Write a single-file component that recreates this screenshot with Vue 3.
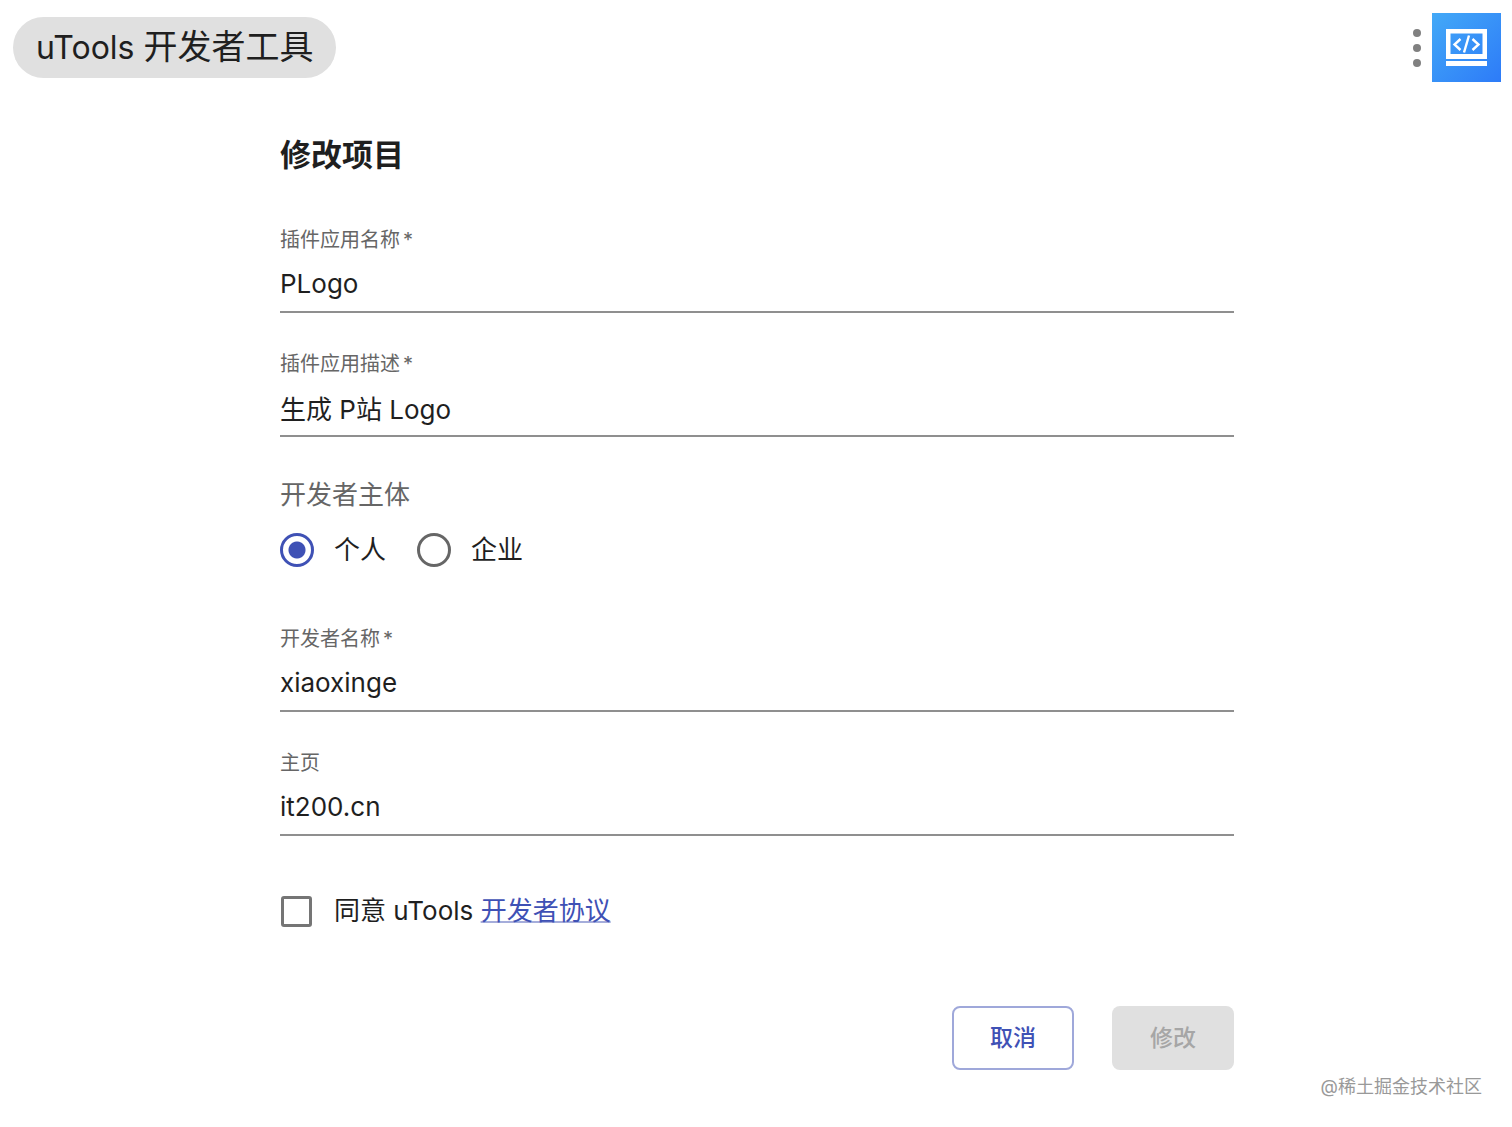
<script setup>
import { ref } from 'vue'

const name = ref('PLogo')
const description = ref('生成 P站 Logo')
const owner = ref('personal')
const developer = ref('xiaoxinge')
const homepage = ref('it200.cn')
const agreed = ref(false)
</script>

<template>
  <div class="page">
    <header class="topbar">
      <span class="chip"><span class="brand">uTools </span>开发者工具</span>
      <div class="tools">
        <button class="more" type="button" aria-label="更多">
          <svg width="10" height="40" viewBox="0 0 10 40" fill="#808080">
            <circle cx="5" cy="5" r="4" />
            <circle cx="5" cy="20" r="4" />
            <circle cx="5" cy="35" r="4" />
          </svg>
        </button>
        <svg class="logo" width="69" height="69" viewBox="0 0 69 69">
          <defs>
            <linearGradient id="logo-fill" x1="0" y1="0" x2="1" y2="1">
              <stop offset="0" stop-color="#43a9f7" />
              <stop offset="1" stop-color="#2d7bf8" />
            </linearGradient>
          </defs>
          <rect width="69" height="69" fill="url(#logo-fill)" />
          <path fill="#fff" fill-rule="evenodd" d="M14 16H55V46H14ZM18.5 20.5V41H50.5V20.5Z" />
          <rect x="14" y="48" width="41" height="5" fill="#fff" />
          <g fill="none" stroke="#fff" stroke-width="2.4">
            <path d="M28.5 26L22.5 31.5L28.5 37" />
            <path d="M40.5 26L46.5 31.5L40.5 37" />
            <path d="M37 22.5L32 39.5" />
          </g>
        </svg>
      </div>
    </header>

    <form class="form" @submit.prevent>
      <h1>修改项目</h1>

      <div class="fields">
        <div class="field">
          <label for="name">插件应用名称<span class="star">*</span></label>
          <input id="name" v-model="name" type="text" />
        </div>
        <div class="field">
          <label for="description">插件应用描述<span class="star">*</span></label>
          <input id="description" v-model="description" type="text" />
        </div>
      </div>

      <fieldset>
        <legend>开发者主体</legend>
        <div class="options">
          <label class="option">
            <input v-model="owner" type="radio" name="owner" value="personal" />
            <span>个人</span>
          </label>
          <label class="option">
            <input v-model="owner" type="radio" name="owner" value="company" />
            <span>企业</span>
          </label>
        </div>
      </fieldset>

      <div class="fields">
        <div class="field">
          <label for="developer">开发者名称<span class="star">*</span></label>
          <input id="developer" v-model="developer" type="text" />
        </div>
        <div class="field">
          <label for="homepage">主页</label>
          <input id="homepage" v-model="homepage" type="text" />
        </div>
      </div>

      <div class="agree">
        <input id="agree" v-model="agreed" type="checkbox" />
        <label for="agree">同意 uTools <a href="#">开发者协议</a></label>
      </div>

      <div class="actions">
        <button class="btn outlined" type="button">取消</button>
        <button class="btn filled" type="submit" :disabled="!agreed">修改</button>
      </div>
    </form>

    <footer>@稀土掘金技术社区</footer>
  </div>
</template>

<style>
body {
  margin: 0;
  background: #fff;
}
</style>

<style scoped>
.page {
  font-family: Inter, "Noto Sans CJK SC", sans-serif;
  font-size: 26px;
  line-height: 32px;
  color: #1f1f1f;
}

.topbar {
  display: flex;
  align-items: center;
  justify-content: space-between;
  padding: 13px 11px 13px 13px;
}

.chip {
  padding: 0 23px;
  border-radius: 31px;
  background: #e0e0e0;
  font-size: 34px;
  line-height: 60px;
}

.brand {
  font-size: 32px;
}

.tools {
  display: flex;
  align-items: center;
  gap: 10px;
}

.more {
  display: flex;
  padding: 0;
  border: 0;
  background: none;
}

.logo {
  display: block;
}

.form {
  padding: 40px 278px 0 280px;
}

h1 {
  margin: 0 0 53px;
  font-size: 31px;
  line-height: 40px;
  font-weight: 700;
}

.fields {
  display: flex;
  flex-direction: column;
  gap: 39px;
}

.field {
  display: flex;
  flex-direction: column;
}

.field label {
  font-size: 20px;
  line-height: 24px;
  color: #666;
}

.star {
  margin-left: 3px;
}

.field input {
  box-sizing: border-box;
  width: 100%;
  height: 61px;
  padding: 12px 0 8px;
  border: 0;
  border-bottom: 2px solid #8f8f8f;
  background: none;
  font: inherit;
  color: inherit;
  outline: none;
}

fieldset {
  margin: 42px 0 60px;
  padding: 0;
  border: 0;
}

legend {
  padding: 0;
  color: #666;
}

.options {
  display: flex;
  gap: 31px;
  padding-top: 22px;
}

.option {
  display: flex;
  align-items: center;
  gap: 20px;
}

.option input {
  appearance: none;
  box-sizing: border-box;
  width: 34px;
  height: 34px;
  margin: 0;
  border: 3px solid #666;
  border-radius: 50%;
}

.option input:checked {
  border-color: #3f51b5;
  background: radial-gradient(circle, #3f51b5 8px, transparent 9px);
}

.agree {
  display: flex;
  align-items: center;
  gap: 22px;
  margin-top: 59px;
}

.agree input {
  appearance: none;
  box-sizing: border-box;
  width: 31px;
  height: 31px;
  margin: 0 0 0 1px;
  border: 3px solid #757575;
  border-radius: 3px;
}

.agree input:checked {
  border-color: #3f51b5;
  background: #3f51b5;
}

.agree a {
  color: #3f51b5;
  text-decoration: underline;
  text-decoration-color: #a5addb;
  text-decoration-thickness: 2px;
}

.actions {
  display: flex;
  justify-content: flex-end;
  gap: 38px;
  margin-top: 79px;
}

.btn {
  box-sizing: border-box;
  width: 122px;
  height: 64px;
  padding: 0;
  border: 2px solid transparent;
  border-radius: 8px;
  font: inherit;
  font-size: 23px;
  font-weight: 500;
}

.outlined {
  border-color: #9fa8da;
  background: #fff;
  color: #3f51b5;
}

.filled {
  background: #3f51b5;
  color: #fff;
}

.filled:disabled {
  background: #e0e0e0;
  color: #a6a6a6;
}

footer {
  padding: 5px 30px 0;
  font-size: 18px;
  line-height: 24px;
  text-align: right;
  color: #999;
}
</style>
